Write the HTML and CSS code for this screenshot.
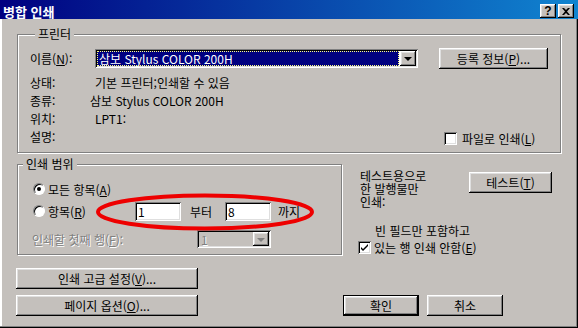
FILE: index.html
```html
<!DOCTYPE html>
<html lang="ko">
<head>
  <meta charset="UTF-8">
  <title>병합 인쇄</title>
  <link rel="stylesheet" href="styles.css">
</head>
<body>
  <div class="window">
    <!-- Title Bar -->
    <div class="titlebar">
      <span class="title">병합 인쇄</span>
      <div class="title-buttons">
        <span class="tbtn help">?</span>
        <span class="tbtn">
          <svg width="8" height="7" viewBox="0 0 8 7"><path d="M0 0h2l2 2 2-2h2L5 3.5 8 7H6L4 5 2 7H0l3-3.5z" fill="#000"/></svg>
        </span>
      </div>
    </div>

    <div class="content">
      <!-- Printer -->
      <fieldset class="group printer">
        <legend>프린터</legend>
        <div class="name-row">
          <span class="label">이름(<u>N</u>):</span>
          <div class="combo field name-combo">
            <span class="combo-value selected">삼보 Stylus COLOR 200H</span>
            <span class="drop"><i></i></span>
          </div>
          <button class="btn props">등록 정보(<u>P</u>)...</button>
        </div>
        <div class="info-row"><span class="label">상태:</span><span class="value">기본 프린터;인쇄할 수 있음</span></div>
        <div class="info-row"><span class="label">종류:</span><span class="value shift">삼보 Stylus COLOR 200H</span></div>
        <div class="info-row"><span class="label">위치:</span><span class="value">LPT1:</span></div>
        <div class="info-row">
          <span class="label">설명:</span>
          <label class="check to-file"><span class="box field"></span>파일로 인쇄(<u>L</u>)</label>
        </div>
      </fieldset>

      <div class="middle">
        <!-- Print Range -->
        <fieldset class="group range">
          <legend>인쇄 범위</legend>
          <div class="range-body">
            <div class="range-row">
              <span class="radio on"></span><span>모든 항목(<u>A</u>)</span>
            </div>
            <div class="range-row">
              <div class="radio-label"><span class="radio"></span><span>항목(<u>R</u>)</span></div>
              <span class="edit field">1</span>
              <span class="word from">부터</span>
              <span class="edit field">8</span>
              <span class="word to">까지</span>
            </div>
            <div class="range-row disabled-row">
              <span class="first-label disabled">인쇄할 첫째 행(<u>F</u>):</span>
              <div class="combo field small-combo">
                <span class="combo-value disabled">1</span>
                <span class="drop off"><i></i></span>
              </div>
            </div>
            <svg class="circle-mark" width="220" height="38" viewBox="0 0 220 38">
              <ellipse cx="110" cy="19" rx="107" ry="16.5" fill="none" stroke="#ee0000" stroke-width="4"/>
            </svg>
          </div>
        </fieldset>

        <!-- Test -->
        <div class="test-col">
          <div class="test-top">
            <p class="test-text">테스트용으로<br>한 발행물만<br>인쇄:</p>
            <button class="btn test-btn">테스트(<u>T</u>)</button>
          </div>
          <p class="blank-text">빈 필드만 포함하고</p>
          <label class="check skip">
            <span class="box field">
              <svg width="9" height="9" viewBox="0 0 9 9"><path d="M1 4l2 2 5-5v2L3 8 1 6z" fill="#000"/></svg>
            </span>있는 행 인쇄 안함(<u>E</u>)
          </label>
        </div>
      </div>

      <!-- Bottom Buttons -->
      <div class="footer">
        <div class="footer-left">
          <button class="btn wide">인쇄 고급 설정(<u>V</u>)...</button>
          <button class="btn wide">페이지 옵션(<u>O</u>)...</button>
        </div>
        <button class="btn ok default">확인</button>
        <button class="btn ok">취소</button>
      </div>
    </div>
  </div>
</body>
</html>
```

FILE: styles.css
```css
* {
  box-sizing: border-box;
}
body {
  margin: 0;
  font-family: "Noto Sans CJK KR", "Noto Sans", sans-serif;
  font-size: 12px;
  color: #000;
  background: #c4c0bc;
}
u {
  text-decoration: underline;
  text-underline-offset: 1px;
}
p {
  margin: 0;
}
.window {
  width: 578px;
  height: 328px;
  background: #c4c0bc;
  box-shadow: inset -1px -1px #000, inset -2px -2px #808080, inset 2px 0 #fff;
  display: flex;
  flex-direction: column;
}
.titlebar {
  height: 19px;
  display: flex;
  justify-content: space-between;
  padding: 0 4px 0 3px;
  background: linear-gradient(to right, #000080, #1084d0);
}
.title {
  color: #fff;
  font-weight: bold;
  font-size: 13px;
  line-height: 15px;
  padding-top: 4px;
}
.title-buttons {
  display: flex;
  gap: 2px;
  align-self: flex-end;
  margin-bottom: 1px;
}
.tbtn {
  width: 16px;
  height: 14px;
  background: #c4c0bc;
  box-shadow: inset -1px -1px #000, inset 1px 1px #fff, inset -2px -2px #808080, inset 2px 2px #dfdfdf;
  display: flex;
  align-items: center;
  justify-content: center;
}
.help {
  font-family: "Liberation Sans", sans-serif;
  font-weight: bold;
  font-size: 12px;
  line-height: 12px;
}

.content {
  padding: 8px 16px 0 16px;
}
.group {
  margin: 0 0 0 1px;
  padding: 0;
  min-inline-size: 0;
  border: 1px solid #808080;
  box-shadow: inset 1px 1px #fff, 1px 1px #fff;
}
.group legend {
  margin-left: 5px;
  padding: 0 3px;
  line-height: 14px;
  background: #c4c0bc;
}

/* Printer */
.printer {
  width: 544px;
  padding: 0 0 7px 12px;
}
.name-row {
  display: flex;
  align-items: center;
  height: 21px;
  margin-top: 7px;
}
.label {
  width: 65px;
  flex: none;
}
.field {
  background: #fff;
  box-shadow: inset 1px 1px #808080, inset -1px -1px #fff, inset 2px 2px #000, inset -2px -2px #dfdfdf;
}
.combo {
  display: flex;
  padding: 2px;
  height: 19px;
}
.name-combo {
  width: 323px;
}
.combo-value {
  flex: 1;
  line-height: 15px;
  padding-left: 2px;
  white-space: nowrap;
}
.selected {
  background: #000080;
  color: #fff;
  outline: 1px dotted #ffff80;
  outline-offset: -1px;
  margin: 0 1px 0 0;
}
.drop {
  width: 16px;
  flex: none;
  background: #c4c0bc;
  box-shadow: inset -1px -1px #000, inset 1px 1px #fff, inset -2px -2px #808080, inset 2px 2px #dfdfdf;
  display: flex;
  align-items: center;
  justify-content: center;
}
.drop i {
  width: 0;
  height: 0;
  border-left: 4px solid transparent;
  border-right: 4px solid transparent;
  border-top: 4px solid #000;
  margin-top: 1px;
}
.drop.off i {
  border-top-color: #808080;
}
.btn {
  font: inherit;
  color: #000;
  background: #c4c0bc;
  border: 0;
  padding: 0;
  height: 21px;
  line-height: 14px;
  box-shadow: inset -1px -1px #000, inset 1px 1px #fff, inset -2px -2px #808080, inset 2px 2px #dfdfdf;
  display: flex;
  align-items: center;
  justify-content: center;
}
.btn.default {
  border: 1px solid #000;
}
.props {
  width: 109px;
  margin-left: 21px;
}
.info-row {
  display: flex;
  align-items: center;
  height: 18px;
}
.name-row + .info-row {
  margin-top: 4px;
}
.value.shift {
  margin-left: -5px;
}
.check {
  display: flex;
  align-items: center;
}
.box {
  width: 13px;
  height: 13px;
  flex: none;
  display: flex;
  align-items: center;
  justify-content: center;
}
.to-file {
  margin-left: auto;
  width: 116px;
  margin-top: 4px;
}
.to-file .box {
  margin-right: 5px;
}

/* Print range */
.middle {
  display: flex;
  margin-top: 4px;
}
.range {
  width: 325px;
  flex: none;
  padding-bottom: 3px;
}
.range-body {
  position: relative;
  padding: 8px 0 0 15px;
}
.range-row {
  display: flex;
  align-items: center;
  height: 20px;
  margin-bottom: 2px;
}
.radio {
  width: 12px;
  height: 12px;
  flex: none;
  border-radius: 50%;
  background: #fff;
  border: 1px solid;
  border-color: #808080 #fff #fff #808080;
  box-shadow: inset 1px 1px #000;
  margin-right: 3px;
  position: relative;
}
.radio.on::after {
  content: "";
  position: absolute;
  left: 3px;
  top: 3px;
  width: 4px;
  height: 4px;
  border-radius: 50%;
  background: #000;
}
.radio-label {
  display: flex;
  align-items: center;
  width: 102px;
}
.edit {
  width: 46px;
  flex: none;
  height: 19px;
  line-height: 19px;
  padding-left: 3px;
}
.word.from {
  width: 44px;
  flex: none;
  padding-left: 9px;
}
.word.to {
  padding-left: 7px;
}
.disabled-row {
  margin-top: 8px;
}
.disabled {
  color: #808080;
  text-shadow: 1px 1px #fff;
}
.first-label {
  width: 165px;
  margin-left: -1px;
}
.small-combo {
  width: 74px;
  height: 18px;
  background: #c4c0bc;
}
.circle-mark {
  position: absolute;
  left: 77px;
  top: 22px;
}

/* Test column */
.test-col {
  margin-left: 16px;
  padding-top: 12px;
  width: 194px;
}
.test-top {
  display: flex;
  align-items: flex-start;
}
.test-text {
  width: 111px;
  padding-left: 2px;
  line-height: 13px;
}
.test-btn {
  width: 83px;
  margin-top: 3px;
}
.blank-text {
  margin-top: 16px;
  padding-left: 17px;
  line-height: 13px;
}
.skip {
  margin-top: 4px;
  line-height: 13px;
}
.skip .box {
  margin-right: 3px;
}

/* Footer */
.footer {
  display: flex;
  align-items: flex-end;
  margin-top: 13px;
}
.footer-left {
  display: flex;
  flex-direction: column;
  gap: 6px;
}
.btn.wide {
  width: 182px;
}
.btn.ok {
  width: 76px;
  margin-left: 8px;
}
.btn.ok.default {
  margin-left: 145px;
}
```
